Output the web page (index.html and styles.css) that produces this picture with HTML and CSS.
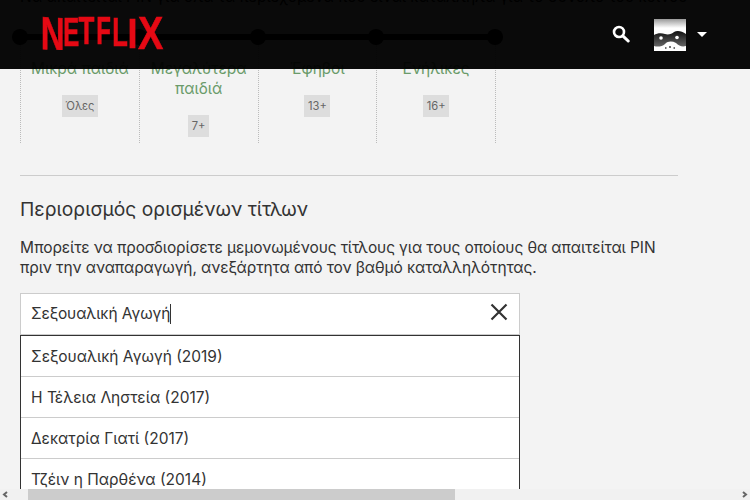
FILE: index.html
```html
<!DOCTYPE html>
<html lang="el">
<head>
  <meta charset="UTF-8" />
  <meta name="viewport" content="width=device-width, initial-scale=1.0" />
  <title>Netflix - Περιορισμοί προβολής</title>
  <link rel="stylesheet" href="styles.css">
</head>
<body>

  <header class="top-bar">
    <svg class="logo" width="122" height="34" viewBox="0 0 122 34" role="img" aria-label="Netflix">
      <g class="logo-letters">
        <text transform="translate(-1.3 33) skewY(3) scale(3.3 4.65)">N</text>
        <text transform="translate(21.3 30) scale(2.4 4.07)">E</text>
        <text transform="translate(36.5 28) scale(2.6 3.8)">T</text>
        <text transform="translate(54.3 28) scale(2.4 3.8)">F</text>
        <text transform="translate(70.2 30) scale(2.55 4.07)">L</text>
        <text transform="translate(85.5 31.5) scale(3.6 4.2)">I</text>
        <text transform="translate(96 33) scale(3.8 4.65)">X</text>
      </g>
    </svg>
    <svg class="search-icon" width="18" height="18" viewBox="0 0 18 18">
      <circle cx="7" cy="7" r="5" fill="none" stroke="#fff" stroke-width="2.6" />
      <path d="M10.8 10.8 L16.2 16" stroke="#fff" stroke-width="3" stroke-linecap="round" />
    </svg>
    <svg class="avatar" width="32" height="32" viewBox="0 0 32 32">
      <defs>
        <linearGradient id="avatar-sky" x1="0" y1="0" x2="0" y2="1">
          <stop offset="0" stop-color="#9a9a9a" />
          <stop offset="1" stop-color="#fff" />
        </linearGradient>
        <linearGradient id="avatar-mask" x1="0" y1="0" x2="0" y2="1">
          <stop offset="0" stop-color="#111" />
          <stop offset="1" stop-color="#666" />
        </linearGradient>
      </defs>
      <rect width="32" height="32" fill="#fff" />
      <rect width="32" height="9" fill="url(#avatar-sky)" />
      <path d="M0 16 C3 14 8 14 11 15 C14 16 18 15 20 13 C23 11 28 12 32 15 V27 C28 28 25 27 22 24 C18 22 14 22 11 25 C8 28 3 28 0 27 Z" fill="url(#avatar-mask)" />
      <circle cx="7" cy="19" r="1.8" fill="#fff" />
      <circle cx="23" cy="18.5" r="1.8" fill="#fff" />
      <path d="M11 29 h1.5 M15 28 h2 M19.5 29 h1.5" stroke="#444" stroke-width="1.4" />
    </svg>
    <span class="caret-down"></span>
  </header>

  <main class="content">
    <p class="intro">Να απαιτείται PIN για όλα τα περιεχόμενα που είναι κατάλληλα για το σύνολο του κοινού</p>

    <div class="rating-track">
      <span class="dot"></span>
      <span class="dot"></span>
      <span class="dot"></span>
      <span class="dot"></span>
      <span class="dot"></span>
    </div>

    <div class="ratings">
      <div class="rating">
        <div class="rating-name">Μικρά παιδιά</div>
        <span class="badge">Όλες</span>
      </div>
      <div class="rating">
        <div class="rating-name">Μεγαλύτερα παιδιά</div>
        <span class="badge">7+</span>
      </div>
      <div class="rating">
        <div class="rating-name">Έφηβοι</div>
        <span class="badge">13+</span>
      </div>
      <div class="rating">
        <div class="rating-name">Ενήλικες</div>
        <span class="badge">16+</span>
      </div>
    </div>

    <section class="restrict">
      <h2>Περιορισμός ορισμένων τίτλων</h2>
      <p>Μπορείτε να προσδιορίσετε μεμονωμένους τίτλους για τους οποίους θα απαιτείται PIN πριν την αναπαραγωγή, ανεξάρτητα από τον βαθμό καταλληλότητας.</p>

      <div class="search-box">
        <span class="search-text">Σεξουαλική Αγωγή</span>
        <svg class="clear-icon" width="18" height="18" viewBox="0 0 18 18">
          <path d="M1.5 1.5 L16.5 16.5 M16.5 1.5 L1.5 16.5" stroke="#333" stroke-width="2.2" />
        </svg>
      </div>
      <ul class="results">
        <li>Σεξουαλική Αγωγή (2019)</li>
        <li>Η Τέλεια Ληστεία (2017)</li>
        <li>Δεκατρία Γιατί (2017)</li>
        <li>Τζέιν η Παρθένα (2014)</li>
      </ul>
    </section>
  </main>

  <div class="scrollbar">
    <svg class="scroll-arrow" width="7" height="7" viewBox="0 0 7 7">
      <path d="M5 1 L2 3.5 L5 6" fill="none" stroke="#666" stroke-width="2" />
    </svg>
    <div class="scroll-thumb"></div>
    <svg class="scroll-arrow" width="7" height="7" viewBox="0 0 7 7">
      <path d="M2 1 L5 3.5 L2 6" fill="none" stroke="#666" stroke-width="2" />
    </svg>
  </div>

</body>
</html>
```

FILE: styles.css
```css
* {
  margin: 0;
  padding: 0;
  box-sizing: border-box;
}

html, body {
  height: 100%;
  overflow: hidden;
}

body {
  background-color: #f3f3f3;
  color: #333;
  font-family: 'Inter', 'Noto Sans', sans-serif;
  font-size: 15.5px;
  line-height: 20px;
}

.top-bar {
  position: fixed;
  top: 0;
  left: 0;
  right: 0;
  height: 69px;
  z-index: 10;
  display: flex;
  align-items: flex-start;
  background-color: rgba(0,0,0,0.96);
}

.logo {
  margin: 16px 0 0 42px;
}

.logo-letters {
  font-family: 'Liberation Sans', sans-serif;
  font-weight: 700;
  font-size: 10px;
  fill: #e50914;
}

.logo-letters text {
  stroke: #e50914;
  stroke-width: 0.5px;
  vector-effect: non-scaling-stroke;
}

.search-icon {
  margin: 25px 0 0 448px;
}

.avatar {
  margin: 19px 0 0 24px;
}

.caret-down {
  margin: 32px 0 0 11px;
  border-left: 5px solid transparent;
  border-right: 5px solid transparent;
  border-top: 5px solid #fff;
}

.content {
  width: 678px;
  padding-left: 20px;
}

.intro {
  margin-top: -13px;
  white-space: nowrap;
  color: #000;
}

.rating-track {
  width: 491px;
  height: 16px;
  margin: 22px 0 0 -8px;
  display: flex;
  justify-content: space-between;
  background: linear-gradient(#000, #000) center / 475px 6px no-repeat;
}

.dot {
  width: 16px;
  height: 16px;
  border-radius: 50%;
  background-color: #000;
}

.ratings {
  display: grid;
  grid-template-columns: repeat(4, 118.75px);
  width: 476px;
  border-right: 1px dotted #bbb;
}

.rating {
  border-left: 1px dotted #bbb;
  padding: 14px 6px 6px;
  text-align: center;
}

.rating-name {
  color: #6a9b6a;
  margin-bottom: 16px;
}

.badge {
  display: block;
  width: fit-content;
  height: 22px;
  margin: 0 auto;
  padding: 0 3.5px;
  background-color: #ddd;
  color: #666;
  font-size: 11.2px;
  line-height: 22px;
}

.restrict {
  margin-top: 32px;
  border-top: 1px solid #ccc;
}

.restrict h2 {
  margin-top: 20px;
  font-size: 19.3px;
  font-weight: 400;
  line-height: 26px;
}

.restrict p {
  margin-top: 16px;
  letter-spacing: -0.1px;
}

.search-box {
  width: 500px;
  height: 42px;
  margin-top: 15px;
  padding: 0 11px 0 10px;
  display: flex;
  align-items: center;
  justify-content: space-between;
  background-color: #fff;
  border: 1px solid #ccc;
}

.search-text {
  border-right: 1px solid #333;
  letter-spacing: -0.1px;
}

.clear-icon {
  margin-bottom: 4px;
}

.results {
  width: 500px;
  list-style: none;
  background-color: #fff;
  border: 1px solid #333;
  border-bottom: none;
}

.results li {
  height: 41px;
  padding: 11px 10px 0;
  border-bottom: 1px solid #ccc;
}

.scrollbar {
  position: fixed;
  left: 0;
  right: 0;
  bottom: 0;
  height: 11px;
  z-index: 20;
  display: flex;
  align-items: center;
  justify-content: space-between;
  padding: 0 2px;
  background-color: #f1f1f1;
}

.scroll-thumb {
  position: absolute;
  top: 0;
  left: 28px;
  width: 427px;
  height: 11px;
  background-color: #ccc;
}
```
